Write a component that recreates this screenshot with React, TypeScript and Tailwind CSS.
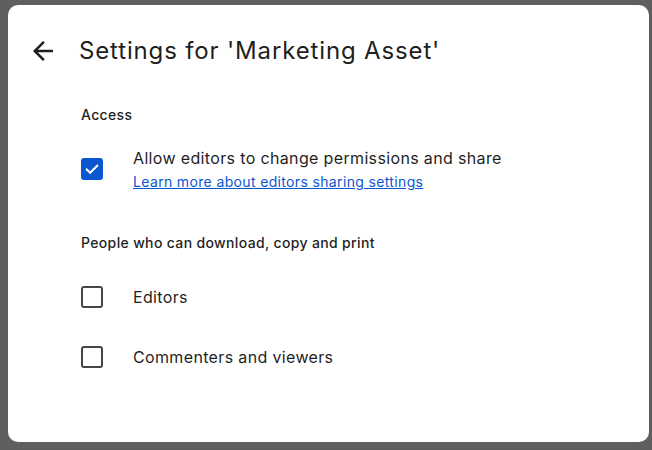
import { useState } from "react";

function Checkbox({ checked, onChange }: { checked: boolean; onChange: () => void }) {
  return (
    <button
      type="button"
      onClick={onChange}
      className={`w-[22px] h-[22px] shrink-0 rounded-[3px] flex items-center justify-center ${
        checked ? "bg-[#0b57d0]" : "border-2 border-[#444746] bg-white"
      }`}
    >
      {checked && (
        <svg viewBox="0 0 24 24" className="w-[18px] h-[18px]" fill="none">
          <path d="M5 12.5l4.5 4.5L19 7.5" stroke="#fff" strokeWidth="2.6" strokeLinecap="square" />
        </svg>
      )}
    </button>
  );
}

export default function App() {
  const [allowEditors, setAllowEditors] = useState(true);
  const [editors, setEditors] = useState(false);
  const [viewers, setViewers] = useState(false);

  return (
    <div
      className="w-[652px] h-[450px] bg-[#5f5f5f] pt-[5px] pl-[8px]"
      style={{ fontFamily: "Inter, Roboto, sans-serif" }}
    >
      <div className="w-[641px] h-[437px] bg-white rounded-[10px] text-[#1f1f1f] tracking-[0.35px]">
        {/* header */}
        <div className="flex items-center h-[48px] pt-[22px] box-content">
          <button className="ml-[20px] w-[30px] h-[30px] flex items-center justify-center">
            <svg viewBox="0 -960 960 960" className="w-[30px] h-[30px]" fill="#1f1f1f">
              <path d="M313-440l224 224-57 56-320-320 320-320 57 56-224 224h487v80H313z" />
            </svg>
          </button>
          <h1 className="ml-[21px] text-[24px] leading-[32px] tracking-[0.85px]">Settings for 'Marketing Asset'</h1>
        </div>

        <div className="pl-[73px]">
          {/* Access */}
          <div className="mt-[30px] text-[14px] leading-[20px] font-medium">Access</div>
          <div className="mt-[21px] flex items-center">
            <Checkbox checked={allowEditors} onChange={() => setAllowEditors(!allowEditors)} />
            <div className="ml-[30px]">
              <div className="text-[16px] leading-[24px]">Allow editors to change permissions and share</div>
              <a href="#" className="block mt-[2px] text-[14px] leading-[20px] text-[#0b57d0] underline">
                Learn more about editors sharing settings
              </a>
            </div>
          </div>

          {/* Download / copy / print */}
          <div className="mt-[41px] text-[14px] leading-[20px] font-medium">
            People who can download, copy and print
          </div>
          <div className="mt-[32px] flex flex-col gap-[36px]">
            <div className="flex items-center h-[24px]">
              <Checkbox checked={editors} onChange={() => setEditors(!editors)} />
              <span className="ml-[30px] text-[16px] leading-[24px]">Editors</span>
            </div>
            <div className="flex items-center h-[24px]">
              <Checkbox checked={viewers} onChange={() => setViewers(!viewers)} />
              <span className="ml-[30px] text-[16px] leading-[24px]">Commenters and viewers</span>
            </div>
          </div>
        </div>
      </div>
    </div>
  );
}
